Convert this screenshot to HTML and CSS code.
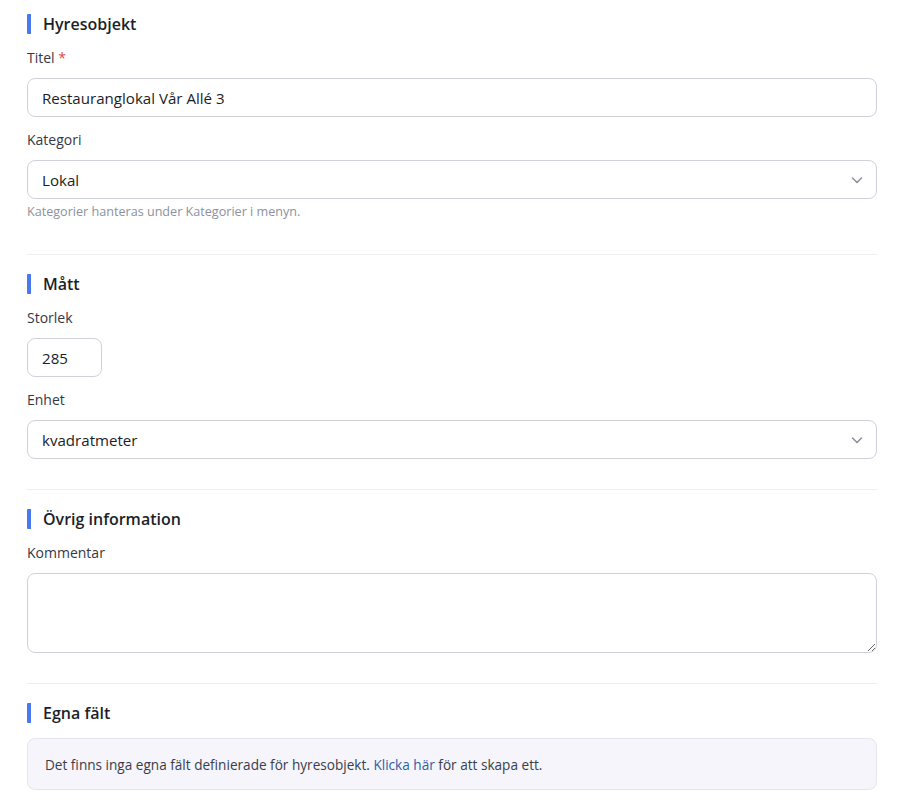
FILE: index.html
```html
<!DOCTYPE html>
<html lang="sv">
<head>
<meta charset="utf-8">
<title>Hyresobjekt</title>
<link rel="stylesheet" href="styles.css">
</head>
<body>
<main class="form">
  <section class="section">
    <h2 class="section-title">Hyresobjekt</h2>
    <div class="field">
      <label class="label">Titel <span class="req">*</span></label>
      <div class="control"><span class="value">Restauranglokal Vår Allé 3</span></div>
    </div>
    <div class="field">
      <label class="label">Kategori</label>
      <div class="control select"><span class="value">Lokal</span>
        <svg class="chev" width="14" height="14" viewBox="0 0 14 14"><path d="M2.5 5 L7 9.5 L11.5 5" fill="none" stroke="#8a8f9c" stroke-width="1.5" stroke-linecap="round" stroke-linejoin="round"/></svg>
      </div>
      <p class="help">Kategorier hanteras under Kategorier i menyn.</p>
    </div>
  </section>
  <hr class="divider">
  <section class="section">
    <h2 class="section-title">Mått</h2>
    <div class="field">
      <label class="label">Storlek</label>
      <div class="control small"><span class="value">285</span></div>
    </div>
    <div class="field">
      <label class="label">Enhet</label>
      <div class="control select"><span class="value">kvadratmeter</span>
        <svg class="chev" width="14" height="14" viewBox="0 0 14 14"><path d="M2.5 5 L7 9.5 L11.5 5" fill="none" stroke="#8a8f9c" stroke-width="1.5" stroke-linecap="round" stroke-linejoin="round"/></svg>
      </div>
    </div>
  </section>
  <hr class="divider">
  <section class="section">
    <h2 class="section-title">Övrig information</h2>
    <div class="field">
      <label class="label">Kommentar</label>
      <textarea class="textarea"></textarea>
    </div>
  </section>
  <hr class="divider">
  <section class="section">
    <h2 class="section-title">Egna fält</h2>
    <div class="info">Det finns inga egna fält definierade för hyresobjekt. <a class="link" href="#">Klicka här</a> för att skapa ett.</div>
  </section>
</main>
</body>
</html>
```
FILE: styles.css
```css
* { box-sizing: border-box; }
html, body { margin: 0; padding: 0; background: #fff; }
body {
  font-family: "Open Sans", "Noto Sans", sans-serif;
  color: #1f2430;
}
.form {
  width: 850px;
  margin-left: 27px;
  padding-top: 14px;
}
.section { display: flex; flex-direction: column; }
.section-title {
  margin: 0;
  height: 20px;
  line-height: 20px;
  font-size: 16px;
  font-weight: 600;
  color: #1c1f2a;
  border-left: 4px solid #4a78f0;
  border-radius: 1px;
  padding-left: 12px;
}
.field { display: flex; flex-direction: column; margin-top: 13px; }
.field + .field { margin-top: 12px; }
.label {
  font-size: 14px;
  line-height: 20px;
  color: #343845;
  padding-top: 1px;
  margin-bottom: 10px;
}
.req { color: #e5484d; }
.control {
  height: 39px;
  border: 1px solid #cfd2db;
  border-radius: 8px;
  display: flex;
  align-items: center;
  padding: 0 14px;
  font-size: 15.1px;
  color: #1a1d26;
}
.control.small { width: 75px; }
.control.select { justify-content: space-between; padding-right: 12px; }
.help {
  margin: 4px 0 3px;
  font-size: 12.6px;
  line-height: 18px;
  color: #8c91a0;
}
.divider {
  border: 0;
  border-top: 1px solid #ecedf1;
  margin: 30px 0 19px;
}
.textarea {
  height: 80px;
  border: 1px solid #cfd2db;
  border-radius: 8px;
  resize: vertical;
  font-family: inherit;
}
.info {
  margin-top: 15px;
  height: 52px;
  display: flex;
  align-items: center;
  padding: 0 17px;
  background: #f5f5fb;
  border: 1px solid #e3e6ee;
  border-radius: 8px;
  font-size: 13.6px;
  color: #3a3e4a;
  white-space: pre;
}
.link { color: #2f5fa8; text-decoration: none; }
```
